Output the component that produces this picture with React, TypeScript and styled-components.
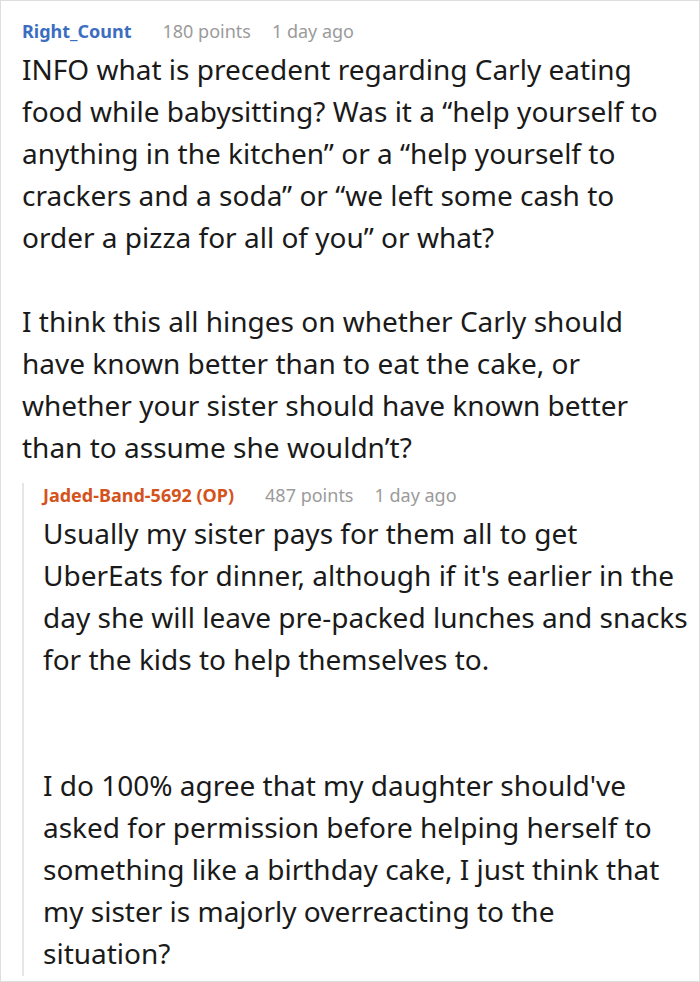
import React from 'react';
import styled, { createGlobalStyle } from 'styled-components';

const GlobalStyle = createGlobalStyle`
  html, body {
    margin: 0;
    padding: 0;
    background: #ffffff;
  }
  body {
    font-family: "Noto Sans", "Open Sans", sans-serif;
  }
`;

const Card = styled.div`
  box-sizing: border-box;
  width: 700px;
  height: 982px;
  border: 1px solid #dedede;
  padding: 18px 11px 0 21px;
  overflow: hidden;
  background: #fff;
`;

const Header = styled.div`
  display: flex;
  align-items: baseline;
  font-size: 18px;
  line-height: 24px;
  margin-bottom: 5px;
`;

const Author = styled.span<{ $op?: boolean }>`
  font-weight: 700;
  color: ${(p) => (p.$op ? '#d4531c' : '#3c6ebf')};
  margin-right: 31px;
`;

const Meta = styled.span`
  color: #9b9b9b;
  margin-right: 21px;
`;

const Body = styled.div`
  font-size: 28px;
  line-height: 42px;
  color: #1a1a1a;
`;

const Para = styled.p<{ $gap?: number }>`
  margin: 0 0 ${(p) => p.$gap ?? 0}px;
`;

const Reply = styled.div`
  margin-top: 15px;
  border-left: 2px solid #e6e6e6;
  padding-left: 19px;
  padding-bottom: 2px;
`;

interface CommentHeadProps {
  author: string;
  points: number;
  age: string;
  op?: boolean;
}

const CommentHead = ({ author, points, age, op }: CommentHeadProps): React.ReactElement => (
  <Header>
    <Author $op={op}>{author}</Author>
    <Meta>{points} points</Meta>
    <Meta>{age}</Meta>
  </Header>
);

const App = (): React.ReactElement => (
  <>
    <GlobalStyle />
    <Card>
      <CommentHead author="Right_Count" points={180} age="1 day ago" />
      <Body>
        <Para $gap={42}>
          INFO what is precedent regarding Carly eating food while babysitting? Was it a “help yourself to
          anything in the kitchen” or a “help yourself to crackers and a soda” or “we left some cash to order a
          pizza for all of you” or what?
        </Para>
        <Para>
          I think this all hinges on whether Carly should have known better than to eat the cake, or whether
          your sister should have known better than to assume she wouldn’t?
        </Para>
      </Body>
      <Reply>
        <CommentHead author="Jaded-Band-5692 (OP)" points={487} age="1 day ago" op />
        <Body>
          <Para $gap={84}>
            Usually my sister pays for them all to get UberEats for dinner, although if it's earlier in the day
            she will leave pre-packed lunches and snacks for the kids to help themselves to.
          </Para>
          <Para>
            I do 100% agree that my daughter should've asked for permission before helping herself to something
            like a birthday cake, I just think that my sister is majorly overreacting to the situation?
          </Para>
        </Body>
      </Reply>
    </Card>
  </>
);

export default App;
